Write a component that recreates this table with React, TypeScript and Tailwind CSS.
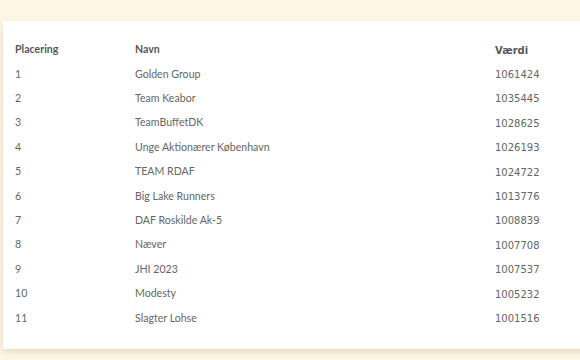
import React from "react";

const rows: [string, string, string][] = [
  ["1", "Golden Group", "1061424"],
  ["2", "Team Keabor", "1035445"],
  ["3", "TeamBuffetDK", "1028625"],
  ["4", "Unge Aktionærer København", "1026193"],
  ["5", "TEAM RDAF", "1024722"],
  ["6", "Big Lake Runners", "1013776"],
  ["7", "DAF Roskilde Ak-5", "1008839"],
  ["8", "Næver", "1007708"],
  ["9", "JHI 2023", "1007537"],
  ["10", "Modesty", "1005232"],
  ["11", "Slagter Lohse", "1001516"],
];

export default function App() {
  return (
    <div className="w-[580px] h-[360px] bg-[#fdf6e4] pt-[21px] pl-[3px] overflow-hidden">
      <div className="w-[600px] h-[328px] bg-white shadow-[0_3px_6px_rgba(120,100,50,0.18)] pt-[17px] pl-[12px]">
        <div
          className="grid grid-cols-[120px_360px_1fr] text-[10.6px] text-[#666]"
          style={{ fontFamily: "Lato, 'Open Sans', sans-serif" }}
        >
          <div className="h-[24.4px] flex items-center font-bold text-[#585858]">Placering</div>
          <div className="h-[24.4px] flex items-center font-bold text-[#585858]">Navn</div>
          <div
            className="h-[24.4px] flex items-center font-bold text-[#585858] text-[10px]"
            style={{ fontFamily: "'DejaVu Sans', sans-serif" }}
          >
            Værdi
          </div>
          {rows.map(([p, n, v]) => (
            <React.Fragment key={p}>
              <div className="h-[24.4px] flex items-center">{p}</div>
              <div className="h-[24.4px] flex items-center">{n}</div>
              <div
                className="h-[24.4px] flex items-center text-[10px]"
                style={{ fontFamily: "'DejaVu Sans', sans-serif" }}
              >
                {v}
              </div>
            </React.Fragment>
          ))}
        </div>
      </div>
    </div>
  );
}
